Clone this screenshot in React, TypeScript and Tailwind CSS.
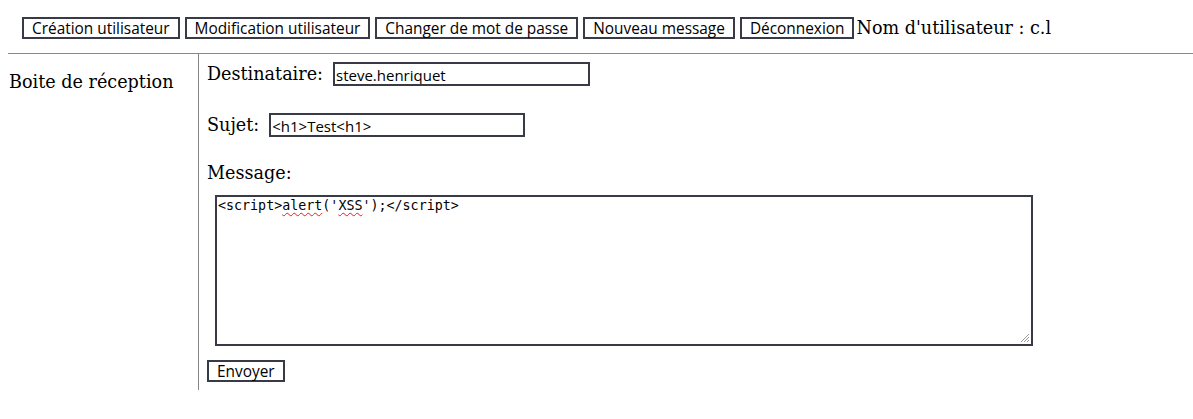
import React from 'react';

const NAV_BUTTONS = [
  'Création utilisateur',
  'Modification utilisateur',
  'Changer de mot de passe',
  'Nouveau message',
  'Déconnexion',
];

const sans = "font-['Open_Sans',sans-serif]";
const frame = 'border-2 border-[#383b47] bg-white text-black';

const NavButton: React.FC<{ label: string }> = ({ label }) => (
  <button className={`${sans} ${frame} text-[15.4px] h-[22px] px-[8px] pt-[1px] pb-0 leading-[17px]`}>{label}</button>
);

const Field: React.FC<{ label: string; value: string; width: string }> = ({ label, value, width }) => (
  <div className="flex items-center h-[24px] gap-[10px]">
    <span className="leading-[20px]">{label}</span>
    <input
      readOnly
      value={value}
      className={`${sans} ${frame} ${width} text-[15px] h-[24px] px-[1px] pt-[1px] pb-0 outline-none`}
    />
  </div>
);

export default function App() {
  return (
    <div className="font-['DejaVu_Serif',serif] text-[17.6px] leading-[20px] text-black bg-white w-[1193px] h-[419px]">
      {/* top bar */}
      <div className="flex items-start pl-[22px] pt-[17px]">
        <div className="flex items-start gap-[5px]">
          {NAV_BUTTONS.map((b) => (
            <NavButton key={b} label={b} />
          ))}
        </div>
        <span className="ml-[2px] mt-[1px]">Nom d'utilisateur : c.l</span>
      </div>

      <div className="ml-[8px] mt-[14px] border-t border-[#888888] flex">
        {/* left menu */}
        <div className="w-[191px] border-r border-[#888888] pl-[1px] pt-[18px]">
          Boite de réception
        </div>

        {/* message form */}
        <div className="pl-[8px] pt-[8px] pb-[8px] flex flex-col">
          <Field label="Destinataire:" value="steve.henriquet" width="w-[257px]" />
          <div className="mt-[27px]">
            <Field label="Sujet:" value="<h1>Test<h1>" width="w-[256px]" />
          </div>
          <div className="mt-[26px]">Message:</div>
          <div
            className={`${frame} relative ml-[8px] mt-[12px] w-[818px] h-[151px] px-[1px] pt-[1px] font-['DejaVu_Sans_Mono',monospace] text-[13.333px] leading-[16px]`}
          >
            &lt;script&gt;
            <span className="underline decoration-wavy decoration-[#e02020] decoration-1 underline-offset-[2px]">alert</span>
            ('
            <span className="underline decoration-wavy decoration-[#e02020] decoration-1 underline-offset-[2px]">XSS</span>
            ');&lt;/script&gt;
            <svg className="absolute right-[1px] bottom-[1px]" width="10" height="10" viewBox="0 0 10 10">
              <line x1="9" y1="1" x2="1" y2="9" stroke="#9a9a9a" strokeWidth="1" />
              <line x1="9" y1="4" x2="4" y2="9" stroke="#9a9a9a" strokeWidth="1" />
              <line x1="9" y1="7" x2="7" y2="9" stroke="#9a9a9a" strokeWidth="1" />
            </svg>
          </div>
          <div className="mt-[14px]">
            <button className={`${sans} ${frame} text-[15.4px] h-[22px] px-[8px] pt-[1px] pb-0 leading-[17px]`}>Envoyer</button>
          </div>
        </div>
      </div>
    </div>
  );
}
